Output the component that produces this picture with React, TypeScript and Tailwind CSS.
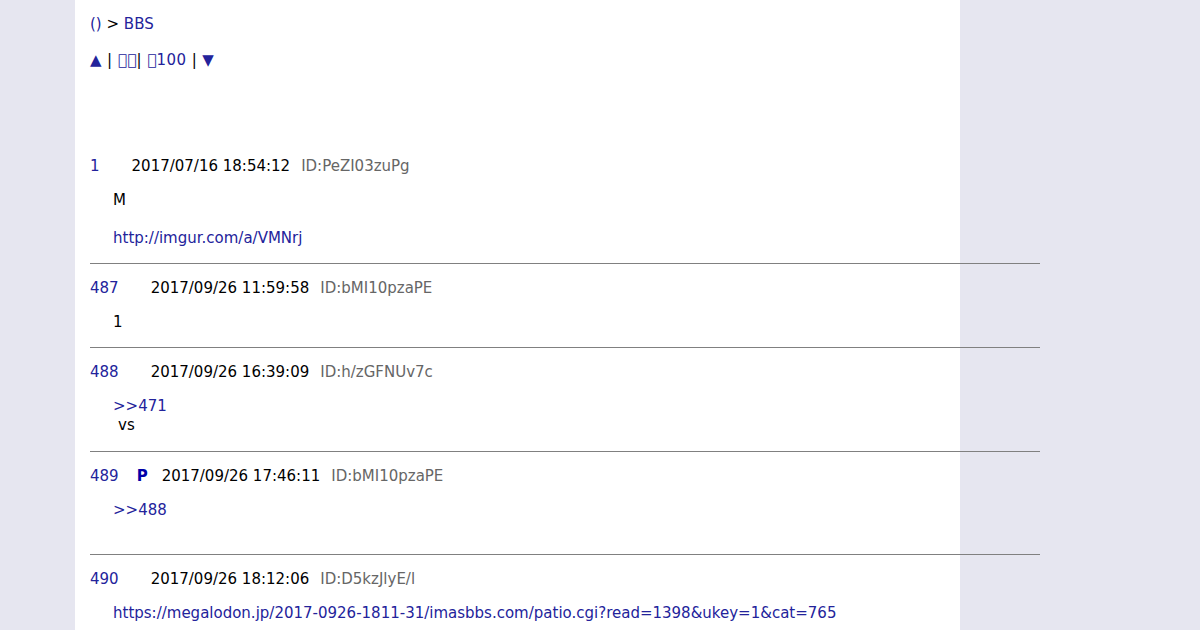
import React from 'react';

type Post = {
  no: number;
  name?: string;
  date: string;
  id: string;
  body: React.ReactNode;
};

const link = 'text-[#23239b]';

const posts: Post[] = [
  {
    no: 1,
    date: '2017/07/16 18:54:12',
    id: 'ID:PeZI03zuPg',
    body: (
      <>
        M
        <br />
        <br />
        <a className={link}>http://imgur.com/a/VMNrj</a>
      </>
    ),
  },
  { no: 487, date: '2017/09/26 11:59:58', id: 'ID:bMI10pzaPE', body: <>1</> },
  {
    no: 488,
    date: '2017/09/26 16:39:09',
    id: 'ID:h/zGFNUv7c',
    body: (
      <>
        <a className={link}>&gt;&gt;471</a>
        <br />
        <span className="ml-[5px]">vs</span>
      </>
    ),
  },
  {
    no: 489,
    name: 'P',
    date: '2017/09/26 17:46:11',
    id: 'ID:bMI10pzaPE',
    body: (
      <>
        <a className={link}>&gt;&gt;488</a>
        <br />
        <br />
      </>
    ),
  },
  {
    no: 490,
    date: '2017/09/26 18:12:06',
    id: 'ID:D5kzJlyE/l',
    body: (
      <a className={link}>
        https://megalodon.jp/2017-0926-1811-31/imasbbs.com/patio.cgi?read=1398&amp;ukey=1&amp;cat=765
      </a>
    ),
  },
];

function PostItem({ post, last }: { post: Post; last: boolean }) {
  return (
    <div>
      <div className="mt-[15px] flex whitespace-nowrap">
        <span className={`${link} mr-[18px]`}>{post.no}</span>
        <b className="mr-[14px] font-bold text-[#0000a8]">{post.name ?? ''}</b>
        <span className="text-black">{post.date}</span>
        <span className="ml-[11px] text-[#666666]">{post.id}</span>
      </div>
      <div className="mt-[15px] mb-[15.4px] pl-[23px] text-black">{post.body}</div>
      {!last && <div className="h-px w-[950px] bg-[#808080]" />}
    </div>
  );
}

export default function App() {
  return (
    <div
      className="min-h-[630px] w-full bg-[#e6e6f0] text-[15px] leading-[19px]"
      style={{ fontFamily: '"DejaVu Sans", Verdana, sans-serif' }}
    >
      <div className="ml-[75px] min-h-[630px] w-[885px] bg-white px-[15px] pt-[15px]">
        <div>
          <a className={link}>()</a> <span className="text-black">&gt;</span>{' '}
          <a className={link}>BBS</a>
        </div>
        <div className="mt-[17px] tracking-[0.4px]">
          <a className={link}>▲</a> <span className="text-black">|</span>{' '}
          <a className={link}>{'\uE000\uE001'}</a>
          <span className="text-black">|</span> <a className={link}>{'\uE002'}100</a>{' '}
          <span className="text-black">|</span> <a className={link}>▼</a>
        </div>
        <div className="mt-[86.6px]">
          {posts.map((p, i) => (
            <PostItem key={p.no} post={p} last={i === posts.length - 1} />
          ))}
        </div>
      </div>
    </div>
  );
}
